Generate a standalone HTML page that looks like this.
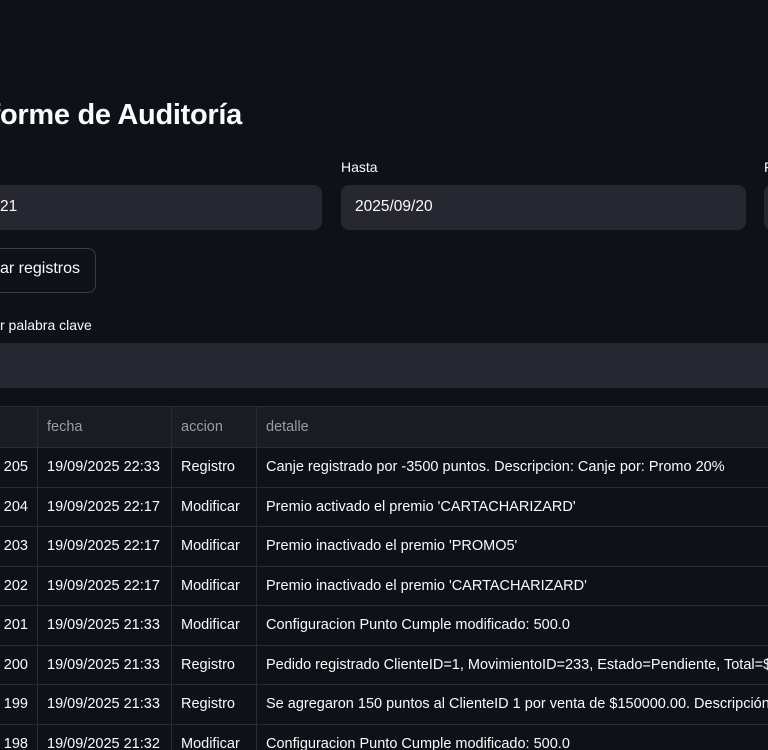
<!DOCTYPE html>
<html><head><meta charset="utf-8"><style>
*{margin:0;padding:0;box-sizing:border-box}
html,body{width:768px;height:750px;overflow:hidden}
body{background:#0e1117;color:#fafafa;font-family:"Liberation Sans",sans-serif;position:relative}
#w{position:absolute;left:0;top:0;width:768px;height:750px;overflow:hidden}
.a{position:absolute;white-space:nowrap}
.pre{position:absolute;right:100%}
.inp{position:absolute;background:#262730;border-radius:8px;height:45px}
table{position:absolute;left:-40px;top:406px;border-collapse:collapse;font-size:14.5px;table-layout:fixed;width:900px}
td,th{border:1px solid #2a2c35;height:39.5px;padding:0 9px;white-space:nowrap;overflow:hidden;text-align:left;font-weight:normal}
th{background:#1a1c24;color:#9a9ca3;height:41px}
td.n{text-align:right}
</style></head><body><div id="w">
<div class="a" style="left:0;top:99px;font-size:29px;font-weight:bold;letter-spacing:-0.3px"><span class="pre">Inf</span>orme de Auditoría</div>
<div class="a" style="left:341px;top:159px;font-size:14px">Hasta</div>
<div class="a" style="left:764px;top:159px;font-size:14px">F</div>
<div class="inp" style="left:-20px;top:185px;width:342px"></div>
<div class="a" style="left:0;top:198px;font-size:15.5px"><span class="pre">2025/08/</span>21</div>
<div class="inp" style="left:341px;top:185px;width:405px"></div>
<div class="a" style="left:355px;top:198px;font-size:15.5px">2025/09/20</div>
<div class="inp" style="left:764px;top:185px;width:60px"></div>
<div style="position:absolute;left:-30px;top:248px;width:126px;height:45px;border:1px solid #3a3c46;border-radius:8px"></div>
<div class="a" style="left:0;top:260px;font-size:16px"><span class="pre">Filtr</span>ar registros</div>
<div class="a" style="left:0;top:317px;font-size:14px"><span class="pre">Buscar po</span>r palabra clave</div>
<div class="inp" style="left:-20px;top:343px;width:800px;border-radius:8px"></div>
<table>
<colgroup><col style="width:77px"><col style="width:134px"><col style="width:85px"><col style="width:604px"></colgroup>
<tr><th></th><th>fecha</th><th>accion</th><th>detalle</th></tr>
<tr><td class="n">205</td><td>19/09/2025 22:33</td><td>Registro</td><td>Canje registrado por -3500 puntos. Descripcion: Canje por: Promo 20%</td></tr>
<tr><td class="n">204</td><td>19/09/2025 22:17</td><td>Modificar</td><td>Premio activado el premio 'CARTACHARIZARD'</td></tr>
<tr><td class="n">203</td><td>19/09/2025 22:17</td><td>Modificar</td><td>Premio inactivado el premio 'PROMO5'</td></tr>
<tr><td class="n">202</td><td>19/09/2025 22:17</td><td>Modificar</td><td>Premio inactivado el premio 'CARTACHARIZARD'</td></tr>
<tr><td class="n">201</td><td>19/09/2025 21:33</td><td>Modificar</td><td>Configuracion Punto Cumple modificado: 500.0</td></tr>
<tr><td class="n">200</td><td>19/09/2025 21:33</td><td>Registro</td><td>Pedido registrado ClienteID=1, MovimientoID=233, Estado=Pendiente, Total=$150000.00</td></tr>
<tr><td class="n">199</td><td>19/09/2025 21:33</td><td>Registro</td><td>Se agregaron 150 puntos al ClienteID 1 por venta de $150000.00. Descripción: x</td></tr>
<tr><td class="n">198</td><td>19/09/2025 21:32</td><td>Modificar</td><td>Configuracion Punto Cumple modificado: 500.0</td></tr>
</table>
</div></body></html>
